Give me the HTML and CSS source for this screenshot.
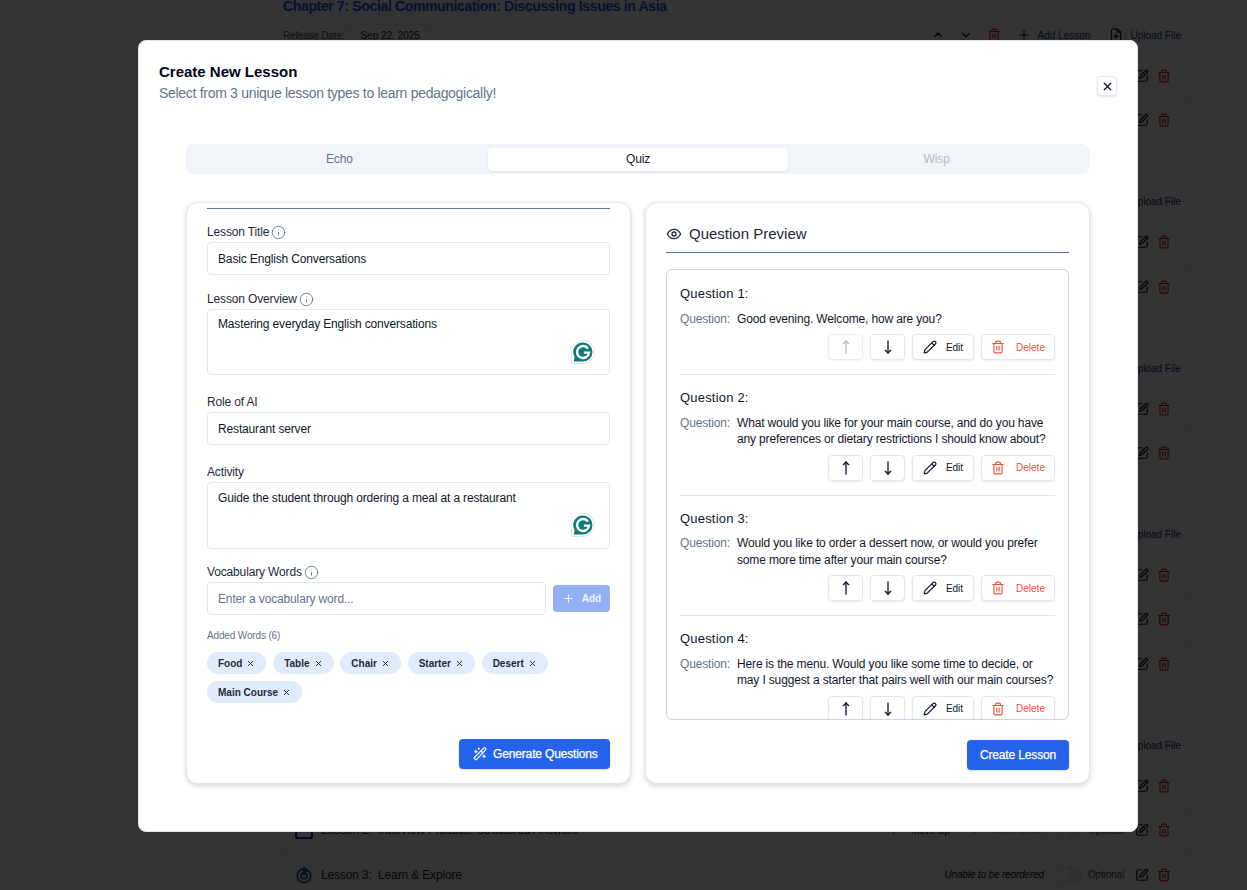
FILE: index.html
```html
<!DOCTYPE html>
<html lang="en">
<head>
<meta charset="utf-8">
<title>Create New Lesson</title>
<link rel="stylesheet" href="styles.css">
</head>
<body>
<svg class="sprite" aria-hidden="true">
  <symbol id="i-trash" viewBox="0 0 24 24"><path d="M3 6h18"/><path d="M19 6v14a2 2 0 0 1-2 2H7a2 2 0 0 1-2-2V6"/><path d="M8 6V4a2 2 0 0 1 2-2h4a2 2 0 0 1 2 2v2"/><path d="M10 11v6"/><path d="M14 11v6"/></symbol>
  <symbol id="i-edit" viewBox="0 0 24 24"><path d="M12 3H5a2 2 0 0 0-2 2v14a2 2 0 0 0 2 2h14a2 2 0 0 0 2-2v-7"/><path d="M18.400 2.600a2.100 2.100 0 1 1 3 3L12 15l-4 1 1-4Z"/></symbol>
  <symbol id="i-pencil" viewBox="0 0 24 24"><path d="M21.200 6.800a2.800 2.800 0 0 0-4-4L3.800 16.200a2 2 0 0 0-.5.8l-1.300 4.400a.5.500 0 0 0 .6.6l4.400-1.300a2 2 0 0 0 .8-.5z"/><path d="m15 5 4 4"/></symbol>
  <symbol id="i-up" viewBox="0 0 24 24"><path d="M12 21V3"/><path d="m8 7 4-4 4 4"/></symbol>
  <symbol id="i-down" viewBox="0 0 24 24"><path d="M12 3v18"/><path d="m8 17 4 4 4-4"/></symbol>
  <symbol id="i-chev-up" viewBox="0 0 24 24"><path d="m6 15 6-6 6 6"/></symbol>
  <symbol id="i-chev-down" viewBox="0 0 24 24"><path d="m6 9 6 6 6-6"/></symbol>
  <symbol id="i-x" viewBox="0 0 24 24"><path d="M18 6 6 18"/><path d="m6 6 12 12"/></symbol>
  <symbol id="i-plus" viewBox="0 0 24 24"><path d="M5 12h14"/><path d="M12 5v14"/></symbol>
  <symbol id="i-info" viewBox="0 0 24 24"><circle cx="12" cy="12" r="10"/><path d="M12 16v-4"/><path d="M12 8h.01"/></symbol>
  <symbol id="i-eye" viewBox="0 0 24 24"><path d="M2 12s3.600-7 10-7 10 7 10 7-3.600 7-10 7-10-7-10-7Z"/><circle cx="12" cy="12" r="3"/></symbol>
  <symbol id="i-file" viewBox="0 0 24 24"><path d="M15 2H6a2 2 0 0 0-2 2v16a2 2 0 0 0 2 2h12a2 2 0 0 0 2-2V7Z"/><path d="M14 2v5h6"/><path d="M12 18v-6"/><path d="m9 15 3-3 3 3"/></symbol>
  <symbol id="i-wand" viewBox="0 0 24 24"><path d="m21.600 2.400-1-1a1.200 1.200 0 0 0-1.700 0L2.400 18a1.200 1.200 0 0 0 0 1.700l1.900 1.900a1.200 1.200 0 0 0 1.700 0L21.600 5a1.200 1.200 0 0 0 0-1.700Z"/><path d="m14 7 3 3"/><path d="M5 6v4"/><path d="M19 14v4"/><path d="M10 2v2"/><path d="M7 8H3"/><path d="M21 16h-4"/><path d="M11 3H9"/></symbol>
  <symbol id="i-grammarly" viewBox="0 0 24 24"><path class="g-halo" d="M12 .5a11.500 11.500 0 0 1 0 23H.5V12A11.500 11.500 0 0 1 12 .5Z"/><path class="g-body" d="M12 2.500a9.500 9.500 0 0 1 0 19H2.800l.9-4.500A9.500 9.500 0 0 1 12 2.500Z"/><path class="g-letter" d="M17 8.600A6 6 0 1 0 18 12.600H12.800"/></symbol>
</svg>

<div class="page">
  <main class="course">
    <section class="chapter">
      <h2 class="chapter-title">Chapter 7: Social Communication: Discussing Issues in Asia</h2>
      <div class="chapter-bar">
        <span class="release-label">Release Date:</span><span class="release-date">Sep 22, 2025</span>
        <span class="chapter-actions">
          <svg class="ic ic-14"><use href="#i-chev-up"/></svg><svg class="ic ic-14"><use href="#i-chev-down"/></svg><svg class="ic ic-14 red"><use href="#i-trash"/></svg>
          <span class="link"><svg class="ic ic-14"><use href="#i-plus"/></svg>Add Lesson</span>
          <span class="link"><svg class="ic ic-14"><use href="#i-file"/></svg>Upload File</span>
        </span>
      </div>
      <div class="lesson-card">
        <div class="lesson-row"><span>Lesson 1: Discussion Warm-Up</span><span class="row-tools"><svg class="ic ic-14"><use href="#i-edit"/></svg><svg class="ic ic-14 red"><use href="#i-trash"/></svg></span></div>
        <div class="lesson-row"><span>Lesson 2: Regional Issues</span><span class="row-tools"><svg class="ic ic-14"><use href="#i-edit"/></svg><svg class="ic ic-14 red"><use href="#i-trash"/></svg></span></div>
      </div>
    </section>
    <section class="chapter">
      <h2 class="chapter-title">Chapter 8: Workplace Communication</h2>
      <div class="chapter-bar">
        <span class="chapter-actions"><span class="link"><svg class="ic ic-14"><use href="#i-file"/></svg>Upload File</span></span>
      </div>
      <div class="lesson-card">
        <div class="lesson-row"><span>Lesson 1: Meetings</span><span class="row-tools"><svg class="ic ic-14"><use href="#i-edit"/></svg><svg class="ic ic-14 red"><use href="#i-trash"/></svg></span></div>
        <div class="lesson-row"><span>Lesson 2: Presentations</span><span class="row-tools"><svg class="ic ic-14"><use href="#i-edit"/></svg><svg class="ic ic-14 red"><use href="#i-trash"/></svg></span></div>
      </div>
    </section>
    <section class="chapter">
      <h2 class="chapter-title">Chapter 9: Negotiation</h2>
      <div class="chapter-bar">
        <span class="chapter-actions"><span class="link"><svg class="ic ic-14"><use href="#i-file"/></svg>Upload File</span></span>
      </div>
      <div class="lesson-card">
        <div class="lesson-row"><span>Lesson 1: Making Offers</span><span class="row-tools"><svg class="ic ic-14"><use href="#i-edit"/></svg><svg class="ic ic-14 red"><use href="#i-trash"/></svg></span></div>
        <div class="lesson-row"><span>Lesson 2: Reaching Agreement</span><span class="row-tools"><svg class="ic ic-14"><use href="#i-edit"/></svg><svg class="ic ic-14 red"><use href="#i-trash"/></svg></span></div>
      </div>
    </section>
    <section class="chapter">
      <h2 class="chapter-title">Chapter 10: Customer Service</h2>
      <div class="chapter-bar">
        <span class="chapter-actions"><span class="link"><svg class="ic ic-14"><use href="#i-file"/></svg>Upload File</span></span>
      </div>
      <div class="lesson-card">
        <div class="lesson-row"><span>Lesson 1: Greeting Guests</span><span class="row-tools"><svg class="ic ic-14"><use href="#i-edit"/></svg><svg class="ic ic-14 red"><use href="#i-trash"/></svg></span></div>
        <div class="lesson-row"><span>Lesson 2: Handling Requests</span><span class="row-tools"><svg class="ic ic-14"><use href="#i-edit"/></svg><svg class="ic ic-14 red"><use href="#i-trash"/></svg></span></div>
        <div class="lesson-row"><span>Lesson 3: Follow-Up</span><span class="row-tools"><svg class="ic ic-14"><use href="#i-edit"/></svg><svg class="ic ic-14 red"><use href="#i-trash"/></svg></span></div>
      </div>
    </section>
    <section class="chapter">
      <h2 class="chapter-title">Chapter 11: Job Interviews</h2>
      <div class="chapter-bar">
        <span class="chapter-actions"><span class="link"><svg class="ic ic-14"><use href="#i-file"/></svg>Upload File</span></span>
      </div>
      <div class="lesson-card">
        <div class="lesson-row"><span>Lesson 1: Introductions</span><span class="row-tools"><svg class="ic ic-14"><use href="#i-edit"/></svg><svg class="ic ic-14 red"><use href="#i-trash"/></svg></span></div>
        <div class="lesson-row">
          <span class="lesson-name"><span class="lesson-icon square"></span>Lesson 2:&nbsp; Interview Practice: Structured Answers</span>
          <span class="row-tools">
            <span class="move"><svg class="ic ic-9"><use href="#i-up"/></svg>Move Up</span><span class="move faint"><svg class="ic ic-9"><use href="#i-down"/></svg>Move Down</span>
            <span class="toggle"></span><span class="optional">Optional</span>
            <svg class="ic ic-14"><use href="#i-edit"/></svg><svg class="ic ic-14 red"><use href="#i-trash"/></svg>
          </span>
        </div>
        <div class="lesson-row">
          <span class="lesson-name"><svg class="ic ic-18 navy" viewBox="0 0 24 24"><circle cx="12" cy="13" r="9"/><circle cx="12" cy="13" r="4"/><path d="M12 13V2l5 4-5 3"/></svg>Lesson 3:&nbsp; Learn &amp; Explore</span>
          <span class="row-tools">
            <em class="reorder">Unable to be reordered</em>
            <span class="toggle"></span><span class="optional">Optional</span>
            <svg class="ic ic-14"><use href="#i-edit"/></svg><svg class="ic ic-14 red"><use href="#i-trash"/></svg>
          </span>
        </div>
      </div>
    </section>
  </main>
</div>

<div class="overlay">
  <div class="modal">
    <header class="modal-head">
      <div>
        <h1 class="modal-title">Create New Lesson</h1>
        <p class="modal-sub">Select from 3 unique lesson types to learn pedagogically!</p>
      </div>
      <button class="close" type="button"><svg class="ic ic-13 thick"><use href="#i-x"/></svg></button>
    </header>

    <div class="modal-body">
      <div class="tabs">
        <div class="tab">Echo</div>
        <div class="tab active">Quiz</div>
        <div class="tab disabled">Wisp</div>
      </div>

      <div class="panes">
        <section class="pane pane-form">
          <div class="pane-rule"></div>

          <div class="field">
            <label class="label">Lesson Title <svg class="ic ic-15 info"><use href="#i-info"/></svg></label>
            <input class="control" value="Basic English Conversations">
          </div>

          <div class="field">
            <label class="label">Lesson Overview <svg class="ic ic-15 info"><use href="#i-info"/></svg></label>
            <div class="area-wrap">
              <textarea class="control area">Mastering everyday English conversations</textarea>
              <svg class="grammarly"><use href="#i-grammarly"/></svg>
            </div>
          </div>

          <div class="field field-wide">
            <label class="label">Role of AI</label>
            <input class="control" value="Restaurant server">
          </div>

          <div class="field field-wide">
            <label class="label">Activity</label>
            <div class="area-wrap">
              <textarea class="control area area-tall">Guide the student through ordering a meal at a restaurant</textarea>
              <svg class="grammarly"><use href="#i-grammarly"/></svg>
            </div>
          </div>

          <div class="field field-vocab">
            <label class="label">Vocabulary Words <svg class="ic ic-15 info"><use href="#i-info"/></svg></label>
            <div class="vocab-row">
              <input class="control" placeholder="Enter a vocabulary word...">
              <button class="add" type="button"><svg class="ic ic-13"><use href="#i-plus"/></svg>Add</button>
            </div>
          </div>

          <div class="added-label">Added Words (6)</div>
          <div class="chips">
            <span class="chip">Food <svg class="ic ic-9 thick"><use href="#i-x"/></svg></span>
            <span class="chip">Table <svg class="ic ic-9 thick"><use href="#i-x"/></svg></span>
            <span class="chip">Chair <svg class="ic ic-9 thick"><use href="#i-x"/></svg></span>
            <span class="chip">Starter <svg class="ic ic-9 thick"><use href="#i-x"/></svg></span>
            <span class="chip">Desert <svg class="ic ic-9 thick"><use href="#i-x"/></svg></span>
            <span class="chip">Main Course <svg class="ic ic-9 thick"><use href="#i-x"/></svg></span>
          </div>

          <div class="pane-foot">
            <button class="primary generate" type="button"><svg class="ic ic-14"><use href="#i-wand"/></svg>Generate Questions</button>
          </div>
        </section>

        <section class="pane pane-preview">
          <h3 class="preview-title"><svg class="ic ic-16"><use href="#i-eye"/></svg>Question Preview</h3>
          <div class="q-list">
            <article class="q">
              <h4 class="q-title">Question 1:</h4>
              <div class="q-line"><span class="q-key">Question:</span><span class="q-text">Good evening. Welcome, how are you?</span></div>
              <div class="q-tools">
                <button class="tool tool-icon off" type="button"><svg class="ic ic-16"><use href="#i-up"/></svg></button>
                <button class="tool tool-icon" type="button"><svg class="ic ic-16"><use href="#i-down"/></svg></button>
                <button class="tool tool-edit" type="button"><svg class="ic ic-14"><use href="#i-pencil"/></svg>Edit</button>
                <button class="tool tool-del" type="button"><svg class="ic ic-14"><use href="#i-trash"/></svg>Delete</button>
              </div>
            </article>
            <article class="q">
              <h4 class="q-title">Question 2:</h4>
              <div class="q-line"><span class="q-key">Question:</span><span class="q-text">What would you like for your main course, and do you have any preferences or dietary restrictions I should know about?</span></div>
              <div class="q-tools">
                <button class="tool tool-icon" type="button"><svg class="ic ic-16"><use href="#i-up"/></svg></button>
                <button class="tool tool-icon" type="button"><svg class="ic ic-16"><use href="#i-down"/></svg></button>
                <button class="tool tool-edit" type="button"><svg class="ic ic-14"><use href="#i-pencil"/></svg>Edit</button>
                <button class="tool tool-del" type="button"><svg class="ic ic-14"><use href="#i-trash"/></svg>Delete</button>
              </div>
            </article>
            <article class="q">
              <h4 class="q-title">Question 3:</h4>
              <div class="q-line"><span class="q-key">Question:</span><span class="q-text">Would you like to order a dessert now, or would you prefer some more time after your main course?</span></div>
              <div class="q-tools">
                <button class="tool tool-icon" type="button"><svg class="ic ic-16"><use href="#i-up"/></svg></button>
                <button class="tool tool-icon" type="button"><svg class="ic ic-16"><use href="#i-down"/></svg></button>
                <button class="tool tool-edit" type="button"><svg class="ic ic-14"><use href="#i-pencil"/></svg>Edit</button>
                <button class="tool tool-del" type="button"><svg class="ic ic-14"><use href="#i-trash"/></svg>Delete</button>
              </div>
            </article>
            <article class="q">
              <h4 class="q-title">Question 4:</h4>
              <div class="q-line"><span class="q-key">Question:</span><span class="q-text">Here is the menu. Would you like some time to decide, or may I suggest a starter that pairs well with our main courses?</span></div>
              <div class="q-tools">
                <button class="tool tool-icon" type="button"><svg class="ic ic-16"><use href="#i-up"/></svg></button>
                <button class="tool tool-icon" type="button"><svg class="ic ic-16"><use href="#i-down"/></svg></button>
                <button class="tool tool-edit" type="button"><svg class="ic ic-14"><use href="#i-pencil"/></svg>Edit</button>
                <button class="tool tool-del" type="button"><svg class="ic ic-14"><use href="#i-trash"/></svg>Delete</button>
              </div>
            </article>
          </div>
          <div class="pane-foot preview-foot">
            <button class="primary create" type="button">Create Lesson</button>
          </div>
        </section>
      </div>
    </div>
  </div>
</div>
</body>
</html>
```
FILE: styles.css
```css
* { box-sizing: border-box; }
html, body { margin: 0; height: 100%; overflow: hidden; }
body { font-family: "Liberation Sans", Arial, sans-serif; font-size: 12px; letter-spacing: -.15px; color: #0f172a; background: #fff; }
.sprite { display: none; }

.ic { fill: none; stroke: currentColor; stroke-width: 2; stroke-linecap: round; stroke-linejoin: round; flex: none; display: inline-block; }
.ic-9 { width: 9px; height: 9px; }
.ic-13 { width: 13px; height: 13px; }
.ic-14 { width: 14px; height: 14px; }
.ic-15 { width: 15px; height: 15px; }
.ic-16 { width: 16px; height: 16px; }
.ic-18 { width: 18px; height: 18px; }
.thick { stroke-width: 2.5; }
.red { color: #dc2626; }
.navy { color: #1e40af; }

/* page behind the dialog */
.page { height: 890px; padding: 0 32px 0 255px; }
.course { height: 100%; padding: 0 28px 0 27px; border-left: 1px solid #e2e8f0; border-right: 1px solid #e2e8f0; overflow: hidden; }
.chapter { margin-bottom: 23.67px; }
.chapter-title { margin: 0; font-size: 14px; line-height: 12px; font-weight: 700; letter-spacing: -.35px; color: #2563eb; }
.chapter-bar { display: flex; align-items: center; height: 26px; margin-top: 10px; font-size: 10px; letter-spacing: 0; color: #1e3a8a; }
.release-label { color: #475569; margin-right: 4px; letter-spacing: -.15px; }
.release-date { color: #0f172a; border: 1px solid #e2e8f0; border-radius: 4px; padding: 5px 11px; }
.chapter-actions { margin-left: auto; margin-right: 5px; display: flex; align-items: center; gap: 14px; color: #0f172a; }
.link { display: inline-flex; align-items: center; gap: 7px; margin-left: 2px; color: #1e3a8a; }
.link + .link { margin-left: 5px; }
.link .ic { color: #0f172a; }
.lesson-card { margin-top: 5px; border: 1px solid #e2e8f0; border-radius: 6px; }
.lesson-row { display: flex; align-items: center; justify-content: space-between; height: 44px; padding: 0 14px 0 11px; border-bottom: 1px solid #e2e8f0; font-size: 12px; color: #1e293b; }
.lesson-row:last-child { border-bottom: 0; }
.lesson-name { display: inline-flex; align-items: center; gap: 8px; }
.lesson-icon.square { width: 18px; height: 18px; border: 2px solid #1e40af; border-radius: 2px; }
.row-tools { display: flex; align-items: center; gap: 8.5px; color: #0f172a; }
.move { display: inline-flex; align-items: center; gap: 13px; font-size: 10px; margin-right: 1px; }
.move.faint { margin-left: 10px; color: #94a3b8; }
.reorder { font-size: 10px; }
.toggle { position: relative; width: 30px; height: 18px; margin-right: -3px; border-radius: 9px; background: #e2e8f0; }
.toggle::after { content: ""; position: absolute; left: 1px; top: 1px; width: 16px; height: 16px; border-radius: 50%; background: #fff; }
.optional { font-size: 10px; color: #475569; margin-right: 2px; }

/* dialog */
.overlay { position: fixed; inset: 0; background: rgba(0, 0, 0, .8); backdrop-filter: blur(.4px); padding: 40px 109px 58px 138px; }
.modal { height: 792px; background: #fff; border: 1px solid #e2e8f0; border-radius: 8px; }
.modal-head { display: flex; justify-content: space-between; align-items: flex-start; height: 103px; padding: 21px 20px 0; }
.modal-title { margin: 0; font-size: 15px; line-height: 20px; font-weight: 700; letter-spacing: 0; color: #020617; }
.modal-sub { margin: 1px 0 0; font-size: 14px; line-height: 20px; letter-spacing: -.3px; color: #64748b; }
.close { width: 20px; height: 20px; margin-top: 14px; padding: 0; display: flex; align-items: center; justify-content: center; background: #fff; border: 1px solid #e2e8f0; border-radius: 4px; box-shadow: 0 1px 2px rgba(15, 23, 42, .1); color: #0f172a; }

.modal-body { padding: 0 47px; }
.tabs { display: grid; grid-template-columns: repeat(3, 1fr); height: 30px; padding: 4px; background: #f1f5f9; border-radius: 8px; }
.tab { display: flex; align-items: center; justify-content: center; height: 23px; padding-bottom: 1px; font-size: 12px; color: #64748b; border-radius: 4px; }
.tab.active { margin: 0 -.5px; background: #fff; color: #0f172a; box-shadow: 0 1px 2px rgba(15, 23, 42, .1); }
.tab.disabled { color: #b4bcc8; }

.panes { display: grid; grid-template-columns: 445px 445px; gap: 14px; margin-top: 28px; height: 582px; }
.pane { border: 1px solid #e2e8f0; border-radius: 12px; background: #fff; box-shadow: 0 2px 5px rgba(15, 23, 42, .18); padding: 0 20px; display: flex; flex-direction: column; }

.pane-rule { height: 1px; flex: none; margin-top: 5px; background: #64748b; }
.field { margin-top: 14px; }
.field + .field { margin-top: 15px; }
.field + .field-wide { margin-top: 18px; }
.field + .field-vocab { margin-top: 14px; }
.label { display: flex; align-items: center; gap: 2px; height: 17px; padding-top: 1px; margin-bottom: 2px; font-size: 12px; color: #1e293b; }
.info { color: #64748b; stroke-width: 1.4; }
.control { display: block; width: 100%; height: 33px; padding: 0 10px; border: 1px solid #e2e8f0; border-radius: 4px; background: #fff; font: 12px "Liberation Sans", Arial, sans-serif; letter-spacing: inherit; color: #0f172a; outline: 0; }
.control::placeholder { color: #64748b; opacity: 1; }
.area-wrap { position: relative; }
.area { height: 66px; padding: 6px 10px; line-height: 16px; resize: none; }
.area-tall { height: 67px; padding-top: 7px; }
.grammarly { position: absolute; right: 15px; top: 31px; width: 24px; height: 24px; }
.g-halo { fill: #fff; stroke: #dbe5e5; stroke-width: 1; }
.g-body { fill: #0d7c78; stroke: none; }
.g-letter { fill: none; stroke: #fff; stroke-width: 2.4; stroke-linecap: butt; stroke-linejoin: miter; }

.vocab-row { display: flex; align-items: center; gap: 7px; }
.vocab-row .control { flex: 1; }
.add { display: flex; align-items: center; justify-content: center; gap: 7px; width: 57px; height: 27px; padding: 0; border: 0; border-radius: 4px; background: #93b0f5; color: #eef3fe; font: 700 10px "Liberation Sans", Arial, sans-serif; }

.added-label { margin-top: 15px; font-size: 10px; line-height: 12px; color: #64748b; }
.chips { display: flex; flex-wrap: wrap; gap: 7px 6.75px; margin-top: 10px; width: 360px; }
.chip { display: inline-flex; align-items: center; gap: 4px; height: 22px; padding: 0 11px; border-radius: 11px; background: #e0ecfb; font-size: 10px; font-weight: 700; letter-spacing: 0; color: #1e293b; }

.pane-foot { margin-top: auto; padding-bottom: 14px; display: flex; justify-content: flex-end; }
.preview-foot { padding-bottom: 13px; }
.primary { display: flex; align-items: center; justify-content: center; height: 30px; padding: 0; border: 0; border-radius: 4px; background: #2563eb; color: #fff; font: 400 12px "Liberation Sans", Arial, sans-serif; letter-spacing: -.15px; -webkit-text-stroke: .25px #fff; box-shadow: 0 1px 2px rgba(15, 23, 42, .15); }
.generate { width: 151px; gap: 6px; justify-content: flex-start; padding-left: 14px; }
.create { width: 102px; }

.preview-title { display: flex; align-items: center; gap: 7px; height: 50px; flex: none; margin: 0; padding-top: 12px; border-bottom: 1px solid #64748b; font-size: 15px; font-weight: 400; letter-spacing: 0; color: #1e293b; }
.q-list { margin-top: 16px; height: 451px; flex: none; border: 1px solid #cbd5e1; border-radius: 6px; padding: 1px 13px 0; overflow: hidden; }
.q { padding-top: 13px; padding-bottom: 14px; border-bottom: 1px solid #e2e8f0; }
.q-title { margin: 0; font-size: 13px; line-height: 20px; font-weight: 400; letter-spacing: .2px; color: #0f172a; }
.q-line { display: flex; margin-top: 6.5px; line-height: 16.5px; }
.q-key { width: 57px; flex: none; color: #64748b; }
.q-text { color: #0f172a; }
.q-tools { display: flex; justify-content: flex-end; gap: 7px; margin-top: 7px; }
.tool { display: flex; align-items: center; justify-content: center; height: 26px; padding: 0; flex: none; background: #fff; border: 1px solid #e2e8f0; border-radius: 4px; box-shadow: 0 1px 2px rgba(15, 23, 42, .08); font: 10px "Liberation Sans", Arial, sans-serif; color: #0f172a; }
.tool-icon { width: 35px; }
.tool-icon.off { color: #94a3b8; opacity: .7; }
.tool-edit { width: 62px; gap: 9px; }
.tool-del { width: 74px; gap: 11px; color: #f0533f; }
```
